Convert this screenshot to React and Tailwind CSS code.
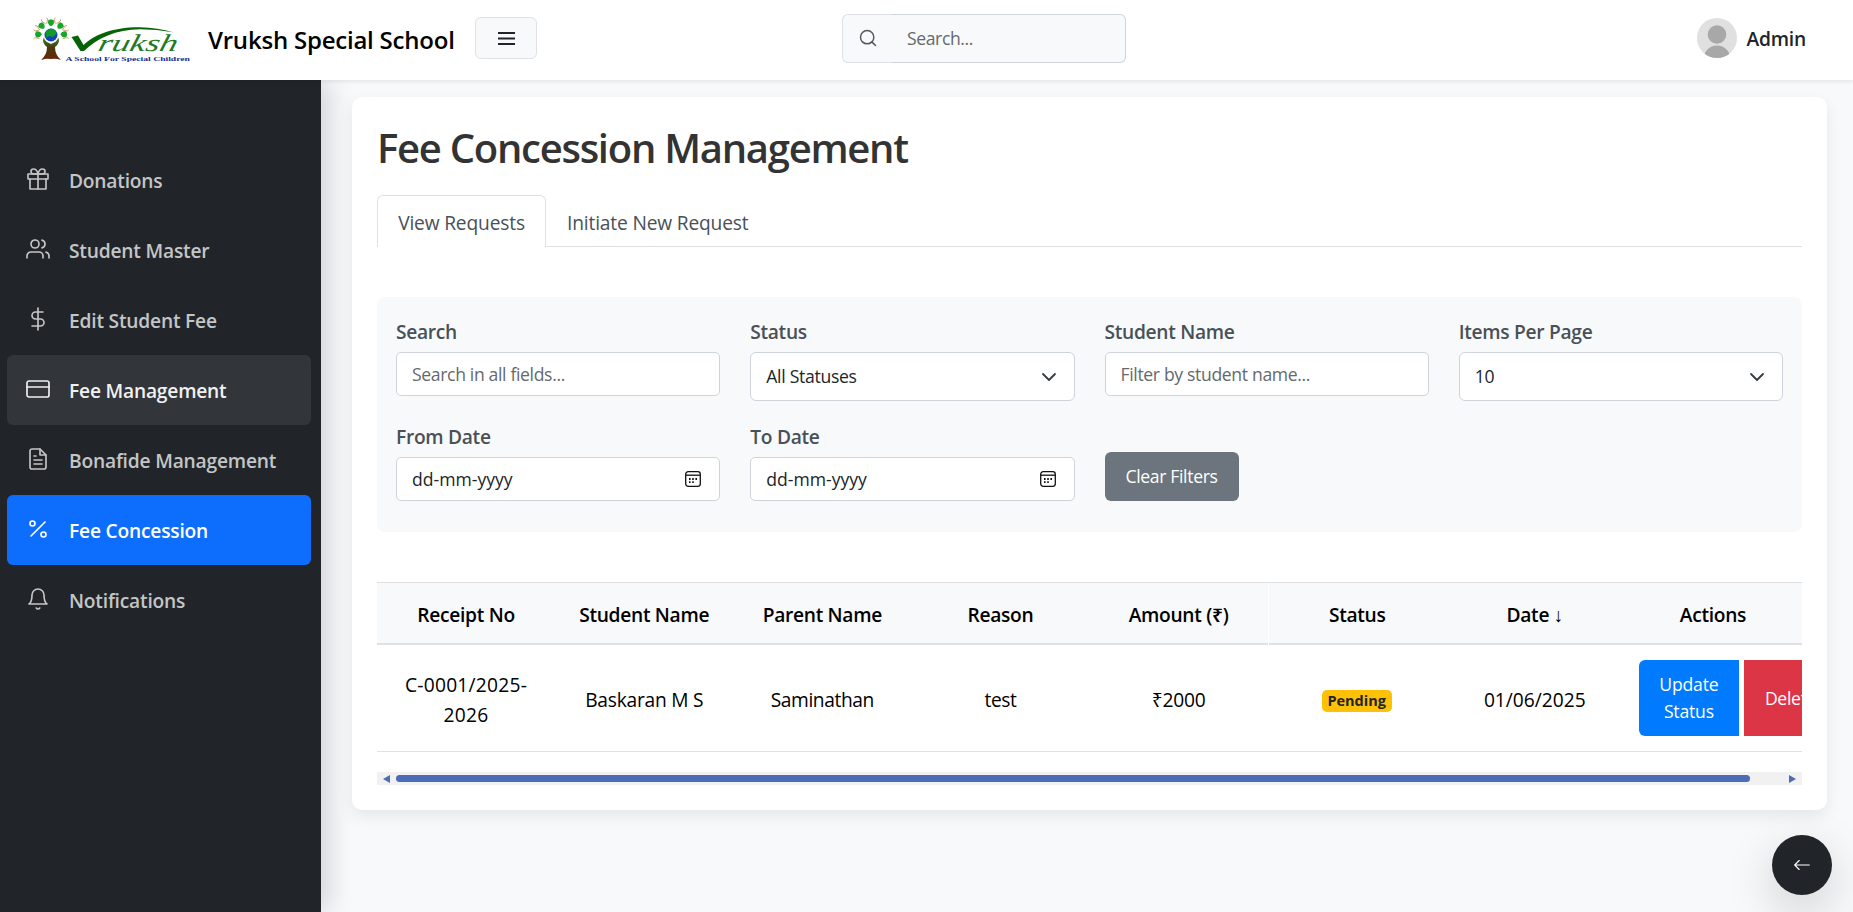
import { FiGift, FiUsers, FiDollarSign, FiCreditCard, FiFileText, FiPercent, FiBell, FiSearch } from "react-icons/fi";
import { BsArrowLeft } from "react-icons/bs";

const NAV = [
  { label: "Donations", Icon: FiGift, tone: "text-[#c4c5c6]" },
  { label: "Student Master", Icon: FiUsers, tone: "text-[#c4c5c6]" },
  { label: "Edit Student Fee", Icon: FiDollarSign, tone: "text-[#c4c5c6]" },
  { label: "Fee Management", Icon: FiCreditCard, tone: "text-[#f1f1f2] bg-[#323539]" },
  { label: "Bonafide Management", Icon: FiFileText, tone: "text-[#c4c5c6]" },
  { label: "Fee Concession", Icon: FiPercent, tone: "text-white bg-[#0d6efd]" },
  { label: "Notifications", Icon: FiBell, tone: "text-[#c4c5c6]" },
];

const HEADERS = ["Receipt No", "Student Name", "Parent Name", "Reason", "Amount (₹)", "Status", "Date ↓", "Actions"];

// Leaf position and rotation around the globe
const LEAVES = [
  [38.5, 34.3, 180],
  [41.8, 26, 225],
  [51, 22.7, 270],
  [60.2, 26, 315],
  [63.8, 34.3, 0],
];

function Logo() {
  return (
    <svg width="160" height="50" viewBox="32 14 160 50" className="shrink-0">
      <defs>
        <linearGradient id="trunk" x1="0" y1="0" x2="0" y2="1">
          <stop offset="0" stopColor="#2f8a1e" />
          <stop offset="0.45" stopColor="#4a3a12" />
          <stop offset="1" stopColor="#6b2408" />
        </linearGradient>
      </defs>
      <path d="M44 37q0 4 5 6l2 1 2-1q5-2 5-6l1 3q0 4-4 7 0 8 6 13-5-2-10-1-5-1-10 1 6-5 6-13-4-3-4-7z" fill="url(#trunk)" />
      <circle cx="51" cy="35" r="6.500" fill="#1540c0" />
      <path d="M45.500 32q3-4.500 8-3l3.500 4-4 4-4-1-3 2z" fill="#0f9a2c" />
      {LEAVES.map(([x, y, a]) => (
        <g key={a} transform={`rotate(${a} ${x} ${y})`}>
          <path d={`M${x - 3.5} ${y}q2-4 6-2.800l1 2.800-1 2.800q-4 1.200-6-2.800z`} fill="#17a52b" />
          <path d={`M${x - 1} ${y - 4.3}l4.500 1 1.500-1.200M${x - 1} ${y + 4.3}l4.500-1 1.500 1.200`} stroke="#c79a63" strokeWidth="0.900" fill="none" />
        </g>
      ))}
      <path d="M71.500 37l6.500-1.500 5.500 9.500C94 35 112 27 140 27.200q18 .5 33 5-16-3-33-3C116 29.500 97 38 84 51h-3.500z" fill="#066306" />
      <g transform="translate(97 51) skewX(-14)">
        <text x="0" y="0" fontFamily="Liberation Serif, serif" fontStyle="italic" fontSize="24" textLength="79" lengthAdjust="spacingAndGlyphs" fill="#1f7a22">ruksh</text>
      </g>
      <text x="65.500" y="60.500" fontFamily="Liberation Serif, serif" fontWeight="700" fontSize="6.500" textLength="124.500" lengthAdjust="spacingAndGlyphs" fill="#1c2f8f">A School For Special Children</text>
    </svg>
  );
}

function Chevron() {
  return (
    <svg width="16" height="16" viewBox="0 0 16 16" fill="none" stroke="#343a40" strokeWidth="1.800" strokeLinecap="round" strokeLinejoin="round">
      <path d="m2 5 6 6 6-6" />
    </svg>
  );
}

function CalendarIcon() {
  return (
    <svg width="16" height="16" viewBox="0 0 16 16" fill="none" stroke="#111" strokeWidth="1.300">
      <rect x="0.700" y="0.700" width="14.600" height="14.600" rx="2.500" />
      <path d="M1 4.200h14" />
      <path d="M4 8h1.600M7.200 8h1.600M10.400 8H12M4 11.200h1.600M7.200 11.200h1.600" strokeWidth="1.800" />
    </svg>
  );
}

function Field({ label, children }) {
  return (
    <div className="flex h-[105px] flex-col">
      <label className="h-[37px] text-[19.2px] font-semibold leading-[34px] tracking-[-0.3px] text-[#495057]">{label}</label>
      {children}
    </div>
  );
}

function TextBox({ children }) {
  return (
    <div className="h-11 rounded-[5px] border border-[#ced4da] bg-white px-[15px] text-[17.6px] leading-[42px] tracking-[-0.35px] text-[#65696d]">
      {children}
    </div>
  );
}

function DateBox() {
  return (
    <div className="flex h-11 items-center justify-between rounded-[5px] border border-[#ced4da] bg-white pl-[15px] pr-[18px] text-[17.6px] text-[#212529]">
      <span className="pt-px">dd-mm-yyyy</span>
      <CalendarIcon />
    </div>
  );
}

function SelectBox({ children }) {
  return (
    <div className="flex h-[49px] items-center justify-between rounded-md border border-[#ced4da] bg-white pl-[15px] pr-[17px] text-[17.6px] tracking-[-0.3px] text-[#212529]">
      <span>{children}</span>
      <Chevron />
    </div>
  );
}

export default function App() {
  return (
    <div className="flex h-[912px] w-[1853px] flex-col overflow-hidden bg-[#f8f9fa] font-['Open_Sans','Noto_Sans',sans-serif] text-[#212529]">
      <header className="relative z-20 flex h-20 shrink-0 items-center bg-white shadow-[0_2px_4px_rgba(0,0,0,0.075)]">
        <div className="flex w-[842px] items-center pl-8">
          <div className="-mt-[2px]"><Logo /></div>
          <span className="ml-4 w-[267px] whitespace-nowrap text-[24px] font-semibold tracking-[-0.22px] text-black">Vruksh Special School</span>
          <button className="-mt-1 flex h-[42px] w-[62px] items-center justify-center rounded-md border border-[#dee2e6] bg-[#f8f9fa]">
            <svg width="17" height="13" viewBox="0 0 17 13" stroke="#212529" strokeWidth="2"><path d="M0 1h17M0 6.500h17M0 12h17" /></svg>
          </button>
        </div>
        <div className="-mt-[3px] flex h-[49px] w-[284px] rounded-md bg-[#f8f9fa]">
          <div className="flex w-[50px] items-center rounded-l-md border border-r-0 border-[#dee2e6] pb-[2px] pl-[15px]">
            <FiSearch size={20} strokeWidth={1.8} className="text-[#55595d]" />
          </div>
          <div className="flex-1 rounded-r-md border border-l-0 border-[#ced4da] pl-[15px] text-[17.6px] leading-[46px] tracking-[-0.4px] text-[#65696d]">Search...</div>
        </div>
        <div className="-mt-1 ml-auto mr-[47px] flex items-center gap-[10px]">
          <svg width="40" height="40" viewBox="0 0 40 40">
            <clipPath id="avatar"><circle cx="20" cy="20" r="20" /></clipPath>
            <g clipPath="url(#avatar)">
              <rect width="40" height="40" fill="#e0e0e0" />
              <circle cx="20" cy="16.500" r="9.300" fill="#a8a8a8" />
              <ellipse cx="20" cy="41" rx="13.500" ry="13.500" fill="#a8a8a8" />
            </g>
          </svg>
          <span className="pt-[2px] text-[19.2px] font-semibold tracking-[-0.2px]">Admin</span>
        </div>
      </header>

      <div className="flex min-h-0 flex-1">
        <aside className="w-[321px] shrink-0 bg-[#212529] pl-[7px] pt-[65px] shadow-[8px_0_24px_rgba(0,0,0,0.15)]">
          <nav className="w-[304px]">
            {NAV.map(({ label, Icon, tone }) => (
              <div key={label} className={`flex h-[70px] items-center rounded-md pl-[19px] ${tone}`}>
                <Icon size={24} strokeWidth={1.65} className="-mt-[2px]" />
                <span className="ml-[19px] pt-[3px] text-[19.2px] font-semibold tracking-[-0.2px]">{label}</span>
              </div>
            ))}
          </nav>
        </aside>

        <main className="flex-1 pl-[31px] pr-[26px] pt-[17px]">
          <section className="h-[713px] rounded-[10px] bg-white px-[25px] pt-[25px] shadow-[0_6px_16px_rgba(0,0,0,0.08)]">
            <h1 className="h-[73px] whitespace-nowrap text-[40px] font-semibold leading-[52px] tracking-[-1.27px] text-[#333]">Fee Concession Management</h1>
            <div className="flex h-[52px] border-b border-[#dee2e6] text-[19.2px] tracking-[-0.17px] text-[#495057]">
              <div className="-mb-px h-[52px] w-[169px] rounded-t-md border border-b-0 border-[#dee2e6] bg-white text-center leading-[53px]">View Requests</div>
              <div className="pl-[21px] leading-[55px]">Initiate New Request</div>
            </div>

            <div className="mt-[50px] grid h-[235px] grid-cols-4 content-start gap-x-[30px] rounded-lg bg-[#f8f9fa] px-[19px] pt-[18px]">
              <Field label="Search"><TextBox>Search in all fields...</TextBox></Field>
              <Field label="Status"><SelectBox>All Statuses</SelectBox></Field>
              <Field label="Student Name"><TextBox>Filter by student name...</TextBox></Field>
              <Field label="Items Per Page"><SelectBox>10</SelectBox></Field>
              <Field label="From Date"><DateBox /></Field>
              <Field label="To Date"><DateBox /></Field>
              <div className="pt-8">
                <button className="h-[49px] w-[134px] rounded-md bg-[#6c757d] text-[17.6px] tracking-[-0.35px] text-white">Clear Filters</button>
              </div>
            </div>

            <div className="mt-[50px] overflow-hidden">
              <div className="grid h-[63px] grid-cols-8 border-b-2 border-t border-[#dee2e6] bg-[#f8f9fa]">
                {HEADERS.map((h) => (
                  <div key={h} className={`whitespace-nowrap text-center text-[19.2px] font-semibold leading-[63px] tracking-[-0.3px] text-black ${h === "Status" ? "border-l border-white" : ""}`}>{h}</div>
                ))}
              </div>
              <div className="grid h-[107px] grid-cols-8 items-center border-b border-[#dee2e6] text-center text-[19.2px] leading-[30px] text-black">
                <div className="pt-[3px] tracking-[0.25px]">C-0001/2025-<br />2026</div>
                <div className="pt-[3px] tracking-[-0.25px]">Baskaran M S</div>
                <div className="pt-[3px] tracking-[-0.4px]">Saminathan</div>
                <div className="pt-[3px] tracking-[-0.4px]">test</div>
                <div className="pt-[3px] tracking-[-0.2px]">₹2000</div>
                <div className="flex justify-center pt-[5px]">
                  <span className="h-[22px] w-[70px] rounded-[5px] bg-[#ffc107] text-[14.5px] font-bold leading-[21px] text-[#212529]">Pending</span>
                </div>
                <div className="pt-[3px]">01/06/2025</div>
                <div className="flex gap-[5px] overflow-hidden pl-[15px] text-[17.6px] leading-[27px] text-white">
                  <button className="h-[76px] w-[100px] shrink-0 rounded-l-md bg-[#007bff] tracking-[-0.2px]">Update<br />Status</button>
                  <button className="h-[76px] w-[94px] shrink-0 bg-[#dc3545] pl-[21px] text-left tracking-[-0.3px]">Delete</button>
                </div>
              </div>
            </div>

            <div className="mt-[20px] flex h-[13px] items-center bg-[#f1f1f1] pl-[6px] pr-[6px]">
              <svg width="7" height="8" viewBox="0 0 7 8" fill="#4b6cb7"><path d="M7 0v8L0 4z" /></svg>
              <div className="ml-[6px] h-[7px] w-[1354px] rounded-full bg-[#4b6cb7]" />
              <svg className="ml-auto" width="7" height="8" viewBox="0 0 7 8" fill="#4b6cb7"><path d="M0 0v8l7-4z" /></svg>
            </div>
          </section>
        </main>
      </div>

      <button className="fixed bottom-[17px] right-[21px] z-30 flex size-[60px] items-center justify-center rounded-full bg-[#212529] text-white shadow-[0_16px_48px_rgba(0,0,0,0.175)]">
        <BsArrowLeft size={18} />
      </button>
    </div>
  );
}
